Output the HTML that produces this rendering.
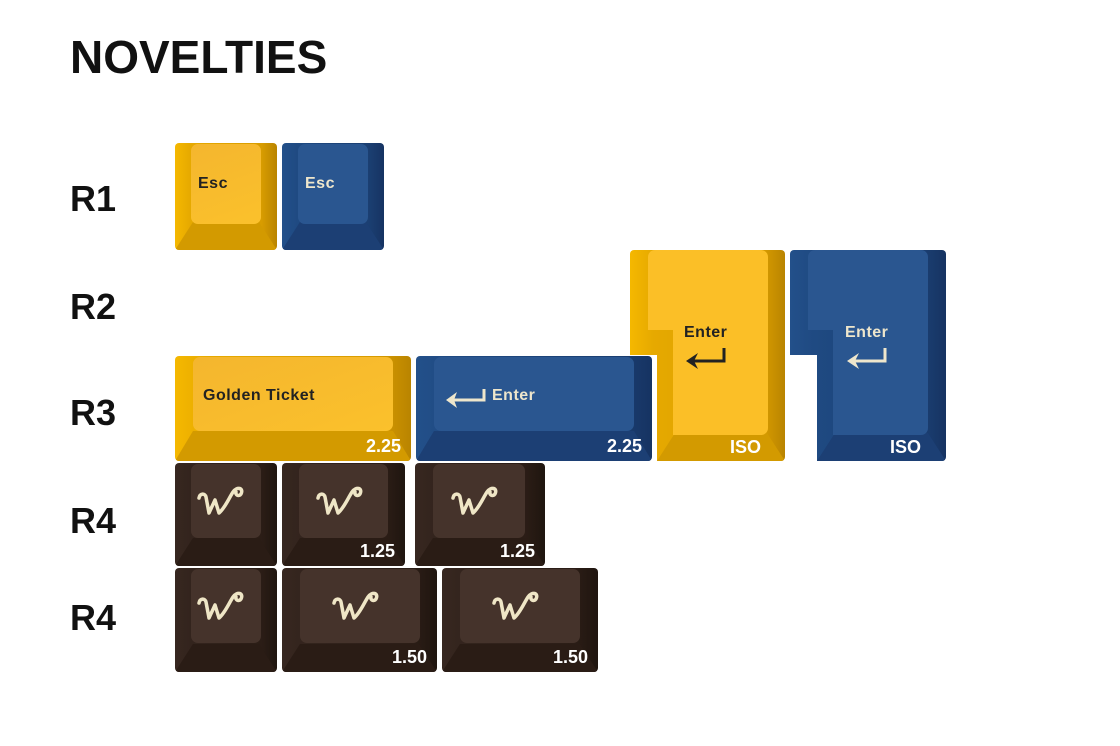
<!DOCTYPE html>
<html><head><meta charset="utf-8"><style>
body{margin:0;width:1120px;height:746px;background:#fff;position:relative;overflow:hidden;font-family:"Liberation Sans",sans-serif}
.t{position:absolute;font-weight:bold;color:#111}
.k{position:absolute;border-radius:4px;overflow:hidden}
.s{position:absolute;border-radius:7px}
.f{position:absolute;left:0;right:0;bottom:0;clip-path:polygon(18px 0,calc(100% - 18px) 0,100% 100%,0 100%)}
.y{background:linear-gradient(90deg,#f5b800 0%,#e6a900 15%,#d89c00 85%,#b98400 100%)}
.y .f{background:#d39a00}
.y .s{background:linear-gradient(160deg,#f4b62e,#fbc12c)}
.b{background:linear-gradient(90deg,#23508a 0%,#1f4a82 15%,#1b3f72 85%,#163362 100%)}
.b .f{background:#1c3f74}
.b .s{background:#2a5690}
.w{background:linear-gradient(90deg,#372720 0%,#33241d 15%,#2b1d16 85%,#1f150f 100%)}
.w .f{background:#2a1c15}
.w .s{background:#45332b}
.lab{position:absolute;font-weight:bold;font-size:16px;letter-spacing:.5px}
.num{position:absolute;right:10px;bottom:4px;font-weight:bold;font-size:18px;color:#fff}
.sw{position:absolute;width:48px;height:36px;overflow:visible}
</style></head><body>
<div class="t" style="left:70px;top:30px;font-size:46px">NOVELTIES</div>
<div class="t" style="left:70px;top:178px;font-size:36px">R1</div>
<div class="t" style="left:70px;top:286px;font-size:36px">R2</div>
<div class="t" style="left:70px;top:392px;font-size:36px">R3</div>
<div class="t" style="left:70px;top:500px;font-size:36px">R4</div>
<div class="t" style="left:70px;top:597px;font-size:36px">R4</div>

<svg width="0" height="0" style="position:absolute"><defs><symbol id="w" viewBox="0 0 48 36"><path d="M2 15C3 10 8 10 9 14L12 30L18 17L22 30C28 25 32 15 36 9C40 3 47 5 44 11C42 14 38 12 39 9" stroke="#efe6c6" stroke-width="3.5" fill="none" stroke-linecap="round" stroke-linejoin="round"/></symbol></defs></svg>

<div class="k y" style="left:175px;top:143px;width:102px;height:107px"><div class="f" style="height:28px"></div><div class="s" style="left:16px;top:1px;width:70px;height:80px"></div><div class="lab" style="left:23px;top:32px;color:#222">Esc</div></div>
<div class="k b" style="left:282px;top:143px;width:102px;height:107px"><div class="f" style="height:28px"></div><div class="s" style="left:16px;top:1px;width:70px;height:80px"></div><div class="lab" style="left:23px;top:32px;color:#eee6cc">Esc</div></div>

<div class="k y" style="left:175px;top:356px;width:236px;height:105px"><div class="f" style="height:30px"></div><div class="s" style="left:18px;top:1px;width:200px;height:74px"></div><div class="lab" style="left:28px;top:31px;color:#222">Golden Ticket</div><div class="num">2.25</div></div>
<div class="k b" style="left:416px;top:356px;width:236px;height:105px"><div class="f" style="height:30px"></div><div class="s" style="left:18px;top:1px;width:200px;height:74px"></div>
<svg style="position:absolute;left:28px;top:30px" width="44" height="22"><path d="M40 3V14H6" stroke="#eee6cc" stroke-width="3" fill="none"/><path d="M2 14L13 6L10 14L13 22Z" fill="#eee6cc"/></svg>
<div class="lab" style="left:76px;top:31px;color:#eee6cc">Enter</div><div class="num">2.25</div></div>

<div class="k y" style="left:630px;top:250px;width:155px;height:211px;clip-path:polygon(0 0,100% 0,100% 100%,27px 100%,27px 105px,0 105px)"><div class="f" style="height:28px;clip-path:polygon(45px 0,calc(100% - 18px) 0,100% 100%,27px 100%)"></div></div>
<div class="s" style="left:648px;top:250px;width:120px;height:185px;background:#fbbf27;clip-path:polygon(0 0,100% 0,100% 100%,25px 100%,25px 80px,0 80px)"></div>
<div class="lab" style="left:684px;top:324px;color:#222">Enter</div>
<svg style="position:absolute;left:684px;top:346px" width="44" height="24"><path d="M40 2V15H6" stroke="#222" stroke-width="3" fill="none"/><path d="M2 15L14 7L10 15L14 23Z" fill="#222"/></svg>
<div class="t" style="left:730px;top:437px;font-size:18px;color:#fff">ISO</div>

<div class="k b" style="left:790px;top:250px;width:156px;height:211px;clip-path:polygon(0 0,100% 0,100% 100%,27px 100%,27px 105px,0 105px)"><div class="f" style="height:28px;clip-path:polygon(45px 0,calc(100% - 18px) 0,100% 100%,27px 100%)"></div></div>
<div class="s" style="left:808px;top:250px;width:120px;height:185px;background:#2a5690;clip-path:polygon(0 0,100% 0,100% 100%,25px 100%,25px 80px,0 80px)"></div>
<div class="lab" style="left:845px;top:324px;color:#eee6cc">Enter</div>
<svg style="position:absolute;left:845px;top:346px" width="44" height="24"><path d="M40 2V15H6" stroke="#eee6cc" stroke-width="3" fill="none"/><path d="M2 15L14 7L10 15L14 23Z" fill="#eee6cc"/></svg>
<div class="t" style="left:890px;top:437px;font-size:18px;color:#fff">ISO</div>

<div class="k w" style="left:175px;top:463px;width:102px;height:103px"><div class="f" style="height:28px"></div><div class="s" style="left:16px;top:1px;width:70px;height:74px"></div><svg class="sw" viewBox="0 0 48 36" style="left:22px;top:20px"><use href="#w" width="48" height="36"/></svg></div>
<div class="k w" style="left:282px;top:463px;width:123px;height:103px"><div class="f" style="height:28px"></div><div class="s" style="left:17px;top:1px;width:89px;height:74px"></div><svg class="sw" viewBox="0 0 48 36" style="left:34px;top:20px"><use href="#w" width="48" height="36"/></svg><div class="num">1.25</div></div>
<div class="k w" style="left:415px;top:463px;width:130px;height:103px"><div class="f" style="height:28px"></div><div class="s" style="left:18px;top:1px;width:92px;height:74px"></div><svg class="sw" viewBox="0 0 48 36" style="left:36px;top:20px"><use href="#w" width="48" height="36"/></svg><div class="num">1.25</div></div>

<div class="k w" style="left:175px;top:568px;width:102px;height:104px"><div class="f" style="height:28px"></div><div class="s" style="left:16px;top:1px;width:70px;height:74px"></div><svg class="sw" viewBox="0 0 48 36" style="left:22px;top:20px"><use href="#w" width="48" height="36"/></svg></div>
<div class="k w" style="left:282px;top:568px;width:155px;height:104px"><div class="f" style="height:28px"></div><div class="s" style="left:18px;top:1px;width:120px;height:74px"></div><svg class="sw" viewBox="0 0 48 36" style="left:50px;top:20px"><use href="#w" width="48" height="36"/></svg><div class="num">1.50</div></div>
<div class="k w" style="left:442px;top:568px;width:156px;height:104px"><div class="f" style="height:28px"></div><div class="s" style="left:18px;top:1px;width:120px;height:74px"></div><svg class="sw" viewBox="0 0 48 36" style="left:50px;top:20px"><use href="#w" width="48" height="36"/></svg><div class="num">1.50</div></div>
</body></html>
